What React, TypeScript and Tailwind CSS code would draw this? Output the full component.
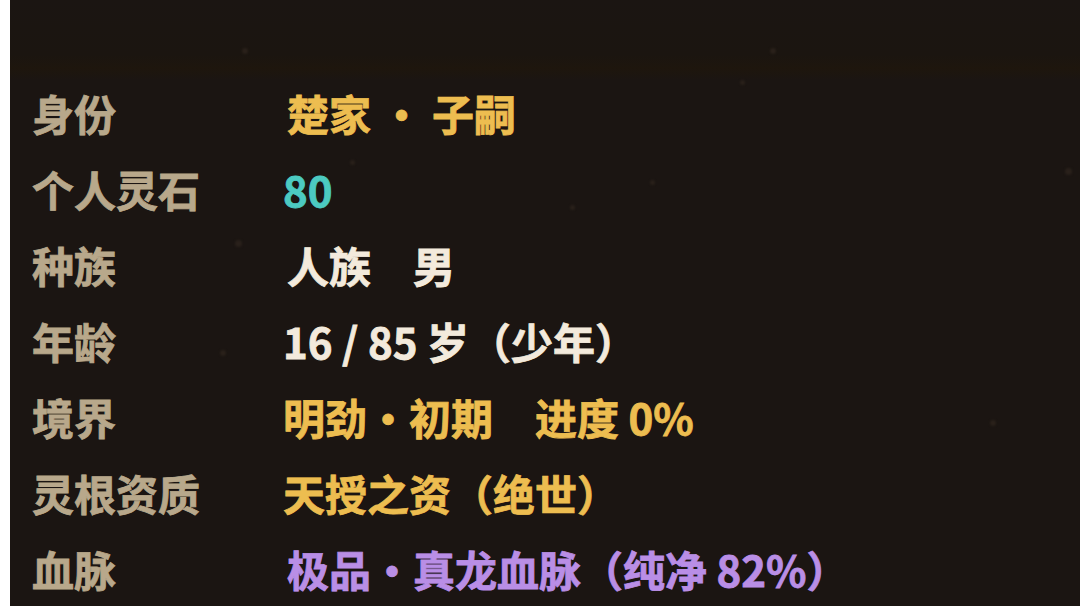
import React from "react";

type Row = {
  label: string;
  value: React.ReactNode;
  color: string;
  indent?: boolean;
};

const rows: Row[] = [
  { label: "身份", value: "楚家 · 子嗣", color: "text-[#edbd50]", indent: true },
  { label: "个人灵石", value: "80", color: "text-[#4ccac1]" },
  { label: "种族", value: "人族　男", color: "text-[#f3eadc]", indent: true },
  { label: "年龄", value: "16 / 85 岁（少年）", color: "text-[#f3eadc]" },
  { label: "境界", value: "明劲・初期　进度 0%", color: "text-[#edbd50]" },
  { label: "灵根资质", value: "天授之资（绝世）", color: "text-[#edbd50]" },
  { label: "血脉", value: "极品・真龙血脉（纯净 82%）", color: "text-[#b98ee6]", indent: true },
];

// faint floating specks in the backdrop
const specks = [
  { x: 232, y: 48, s: 6 },
  { x: 340, y: 160, s: 5 },
  { x: 225, y: 240, s: 7 },
  { x: 640, y: 180, s: 5 },
  { x: 760, y: 48, s: 6 },
  { x: 1055, y: 168, s: 7 },
  { x: 730, y: 80, s: 5 },
  { x: 210, y: 350, s: 6 },
  { x: 560, y: 205, s: 5 },
  { x: 980, y: 420, s: 6 },
];

export default function App() {
  return (
    <div
      className="w-full h-[606px] flex bg-white overflow-hidden"
      style={{ fontFamily: '"Noto Sans CJK SC", "Noto Sans", sans-serif' }}
    >
      <div className="w-[10px] shrink-0 bg-white" />
      <div className="relative flex-1 bg-[#1b1512] bg-[linear-gradient(180deg,#1b1512_0px,#1b1510_55px,#1e160d_68px,#1b1512_80px,#1b1512_100%)]">
        {specks.map((p, i) => (
          <span
            key={i}
            className="absolute rounded-full bg-[#2a211b] blur-[1px]"
            style={{ left: p.x, top: p.y, width: p.s, height: p.s }}
          />
        ))}
        <div className="relative flex flex-col pt-[75px] pl-[22px]">
          {rows.map((r) => (
            <div key={r.label} className="flex items-center h-[76px]">
              <div className="w-[251px] shrink-0 text-[42px] font-bold leading-none text-[#b8a88b] [-webkit-text-stroke:0.8px_currentColor]">
                {r.label}
              </div>
              <div
                className={`text-[42px] font-bold leading-none whitespace-pre [-webkit-text-stroke:0.8px_currentColor] ${r.color} ${r.indent ? "pl-[4px]" : ""}`}
              >
                {r.value}
              </div>
            </div>
          ))}
        </div>
      </div>
    </div>
  );
}
